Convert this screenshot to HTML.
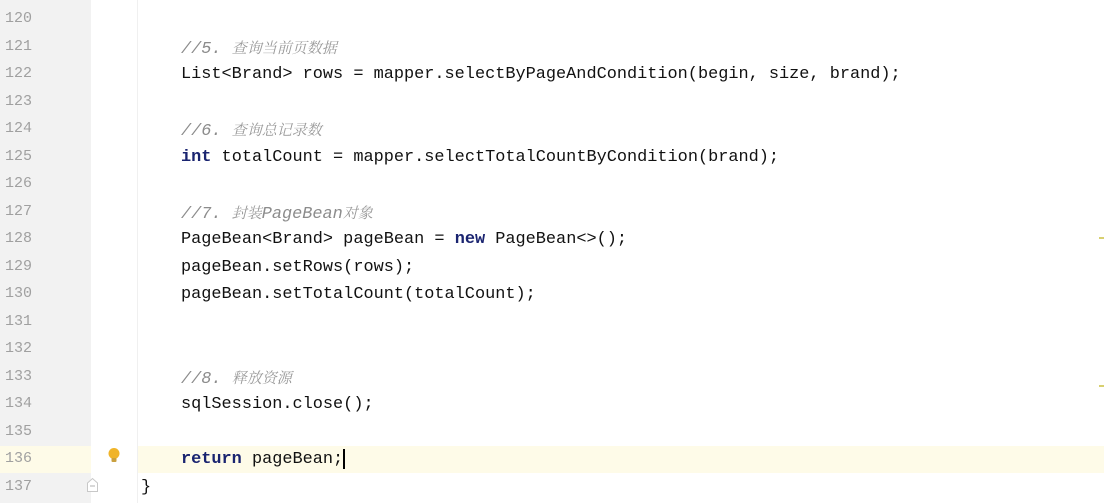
<!DOCTYPE html>
<html><head><meta charset="utf-8"><style>
body{margin:0;width:1104px;height:503px;overflow:hidden;background:#fff;position:relative;font-family:"Liberation Mono",monospace;}
.g{position:absolute;left:0;top:0;width:91px;height:503px;background:#f2f2f2;}
.guide{position:absolute;left:137px;top:0;width:1px;height:503px;background:#f0f0f0;}
.hl{position:absolute;top:446px;height:27px;background:#fefbe8;}
.ln{position:absolute;left:5px;width:40px;font-size:15px;color:#a0a0a0;height:27.5px;line-height:27.5px;}
.c{position:absolute;left:181px;font-size:16.9px;color:#111;height:27.5px;line-height:27.5px;white-space:pre;}
.cm{color:#8c8c8c;font-style:italic;}
.zh{font-family:"Noto Serif CJK SC",serif;font-size:15px;color:#9a9a9a;font-style:italic;}
.k{color:#1a2470;font-weight:bold;}
.mk{position:absolute;left:1099px;width:5px;height:2px;background:#d8d070;}
</style></head><body>
<div class="g"></div>
<div class="hl" style="left:0;width:91px;"></div>
<div class="hl" style="left:138px;width:966px;"></div>
<div class="guide"></div>
<div class="ln" style="top:5px">120</div>
<div class="ln" style="top:32.5px">121</div>
<div class="ln" style="top:60px">122</div>
<div class="ln" style="top:87.5px">123</div>
<div class="ln" style="top:115px">124</div>
<div class="ln" style="top:142.5px">125</div>
<div class="ln" style="top:170px">126</div>
<div class="ln" style="top:197.5px">127</div>
<div class="ln" style="top:225px">128</div>
<div class="ln" style="top:252.5px">129</div>
<div class="ln" style="top:280px">130</div>
<div class="ln" style="top:307.5px">131</div>
<div class="ln" style="top:335px">132</div>
<div class="ln" style="top:362.5px">133</div>
<div class="ln" style="top:390px">134</div>
<div class="ln" style="top:417.5px">135</div>
<div class="ln" style="top:445px">136</div>
<div class="ln" style="top:472.5px">137</div>

<div class="c" style="top:33.5px"><span class="cm">//5. <span class="zh">查询当前页数据</span></span></div>
<div class="c" style="top:61px">List&lt;Brand&gt; rows = mapper.selectByPageAndCondition(begin, size, brand);</div>
<div class="c" style="top:116px"><span class="cm">//6. <span class="zh">查询总记录数</span></span></div>
<div class="c" style="top:143.5px"><span class="k">int</span> totalCount = mapper.selectTotalCountByCondition(brand);</div>
<div class="c" style="top:198.5px"><span class="cm">//7. <span class="zh">封装</span>PageBean<span class="zh">对象</span></span></div>
<div class="c" style="top:226px">PageBean&lt;Brand&gt; pageBean = <span class="k">new</span> PageBean&lt;&gt;();</div>
<div class="c" style="top:253.5px">pageBean.setRows(rows);</div>
<div class="c" style="top:281px">pageBean.setTotalCount(totalCount);</div>
<div class="c" style="top:363.5px"><span class="cm">//8. <span class="zh">释放资源</span></span></div>
<div class="c" style="top:391px">sqlSession.close();</div>
<div class="c" style="top:446px"><span class="k">return</span> pageBean;<span style="display:inline-block;width:1.5px;height:20px;background:#000;vertical-align:middle;"></span></div>
<div class="c" style="top:473.5px;left:141px">}</div>

<svg style="position:absolute;left:107px;top:447px" width="14" height="18" viewBox="0 0 14 18"><circle cx="7" cy="6.5" r="5.5" fill="#f0b429"/><rect x="4.5" y="11" width="5" height="4" rx="1" fill="#c9a040"/></svg>
<svg style="position:absolute;left:86px;top:477px" width="13" height="16" viewBox="0 0 13 16"><path d="M1.5 6 L6.5 1.5 L11.5 6 V14.5 H1.5 Z" fill="#fff" stroke="#c8c8c8"/><line x1="4" y1="9" x2="9" y2="9" stroke="#b0b0b0"/></svg>
<div class="mk" style="top:237px"></div>
<div class="mk" style="top:385px"></div>
</body></html>
